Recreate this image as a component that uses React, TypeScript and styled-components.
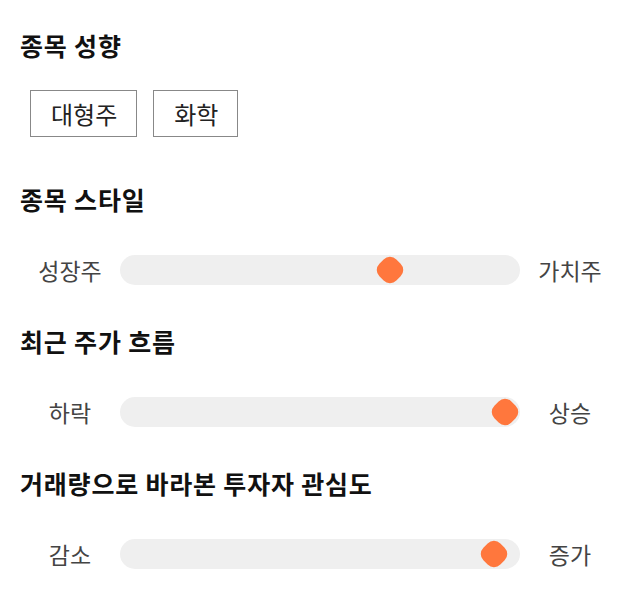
import React from 'react';
import styled, { createGlobalStyle } from 'styled-components';

const GlobalStyle = createGlobalStyle`
  body {
    margin: 0;
    background: #fff;
    font-family: "Noto Sans CJK KR", "Noto Sans", sans-serif;
  }
`;

const sliders = [
  { title: '종목 스타일', left: '성장주', right: '가치주', value: 0.69 },
  { title: '최근 주가 흐름', left: '하락', right: '상승', value: 1 },
  { title: '거래량으로 바라본 투자자 관심도', left: '감소', right: '증가', value: 0.97 },
];

const tags = ['대형주', '화학'];

const App = () => {
  return (
    <>
      <GlobalStyle />
      <Page>
        <Section>
          <Title>종목 성향</Title>
          <Tags>
            {tags.map((tag) => (
              <Tag key={tag}>{tag}</Tag>
            ))}
          </Tags>
        </Section>
        {sliders.map((s) => (
          <Section key={s.title}>
            <Title>{s.title}</Title>
            <SliderRow>
              <Label>{s.left}</Label>
              <Track>
                <Thumb style={{ left: `calc(${s.value} * (100% - 30px))` }} />
              </Track>
              <Label>{s.right}</Label>
            </SliderRow>
          </Section>
        ))}
      </Page>
    </>
  );
};

export default App;

const Page = styled.div`
  display: flex;
  flex-direction: column;
  padding: 27px 20px 0;
`;

const Section = styled.section`
  display: flex;
  flex-direction: column;
  & + & {
    margin-top: 36px;
  }
`;

const Title = styled.h2`
  margin: 0;
  font-size: 25px;
  line-height: 36px;
  font-weight: 700;
  letter-spacing: 0.8px;
  color: #111;
`;

const Tags = styled.div`
  display: flex;
  gap: 16px;
  margin: 27px 0 8px;
  padding-left: 10px;
`;

const Tag = styled.div`
  display: flex;
  align-items: center;
  justify-content: center;
  height: 47px;
  padding: 0 19px 0 20px;
  box-sizing: border-box;
  border: 1px solid #888;
  font-size: 24px;
  color: #222;
`;

const SliderRow = styled.div`
  display: flex;
  align-items: center;
  margin-top: 36px;
`;

const Label = styled.div`
  width: 100px;
  text-align: center;
  font-size: 23px;
  color: #444;
`;

const Track = styled.div`
  position: relative;
  flex: 1;
  height: 30px;
  border-radius: 15px;
  background: #efefef;
`;

const Thumb = styled.div`
  position: absolute;
  top: 0;
  width: 30px;
  height: 30px;
  display: flex;
  align-items: center;
  justify-content: center;

  &::before {
    content: '';
    width: 24px;
    height: 24px;
    border-radius: 9px;
    background: #ff773d;
    transform: rotate(45deg);
  }
`;
